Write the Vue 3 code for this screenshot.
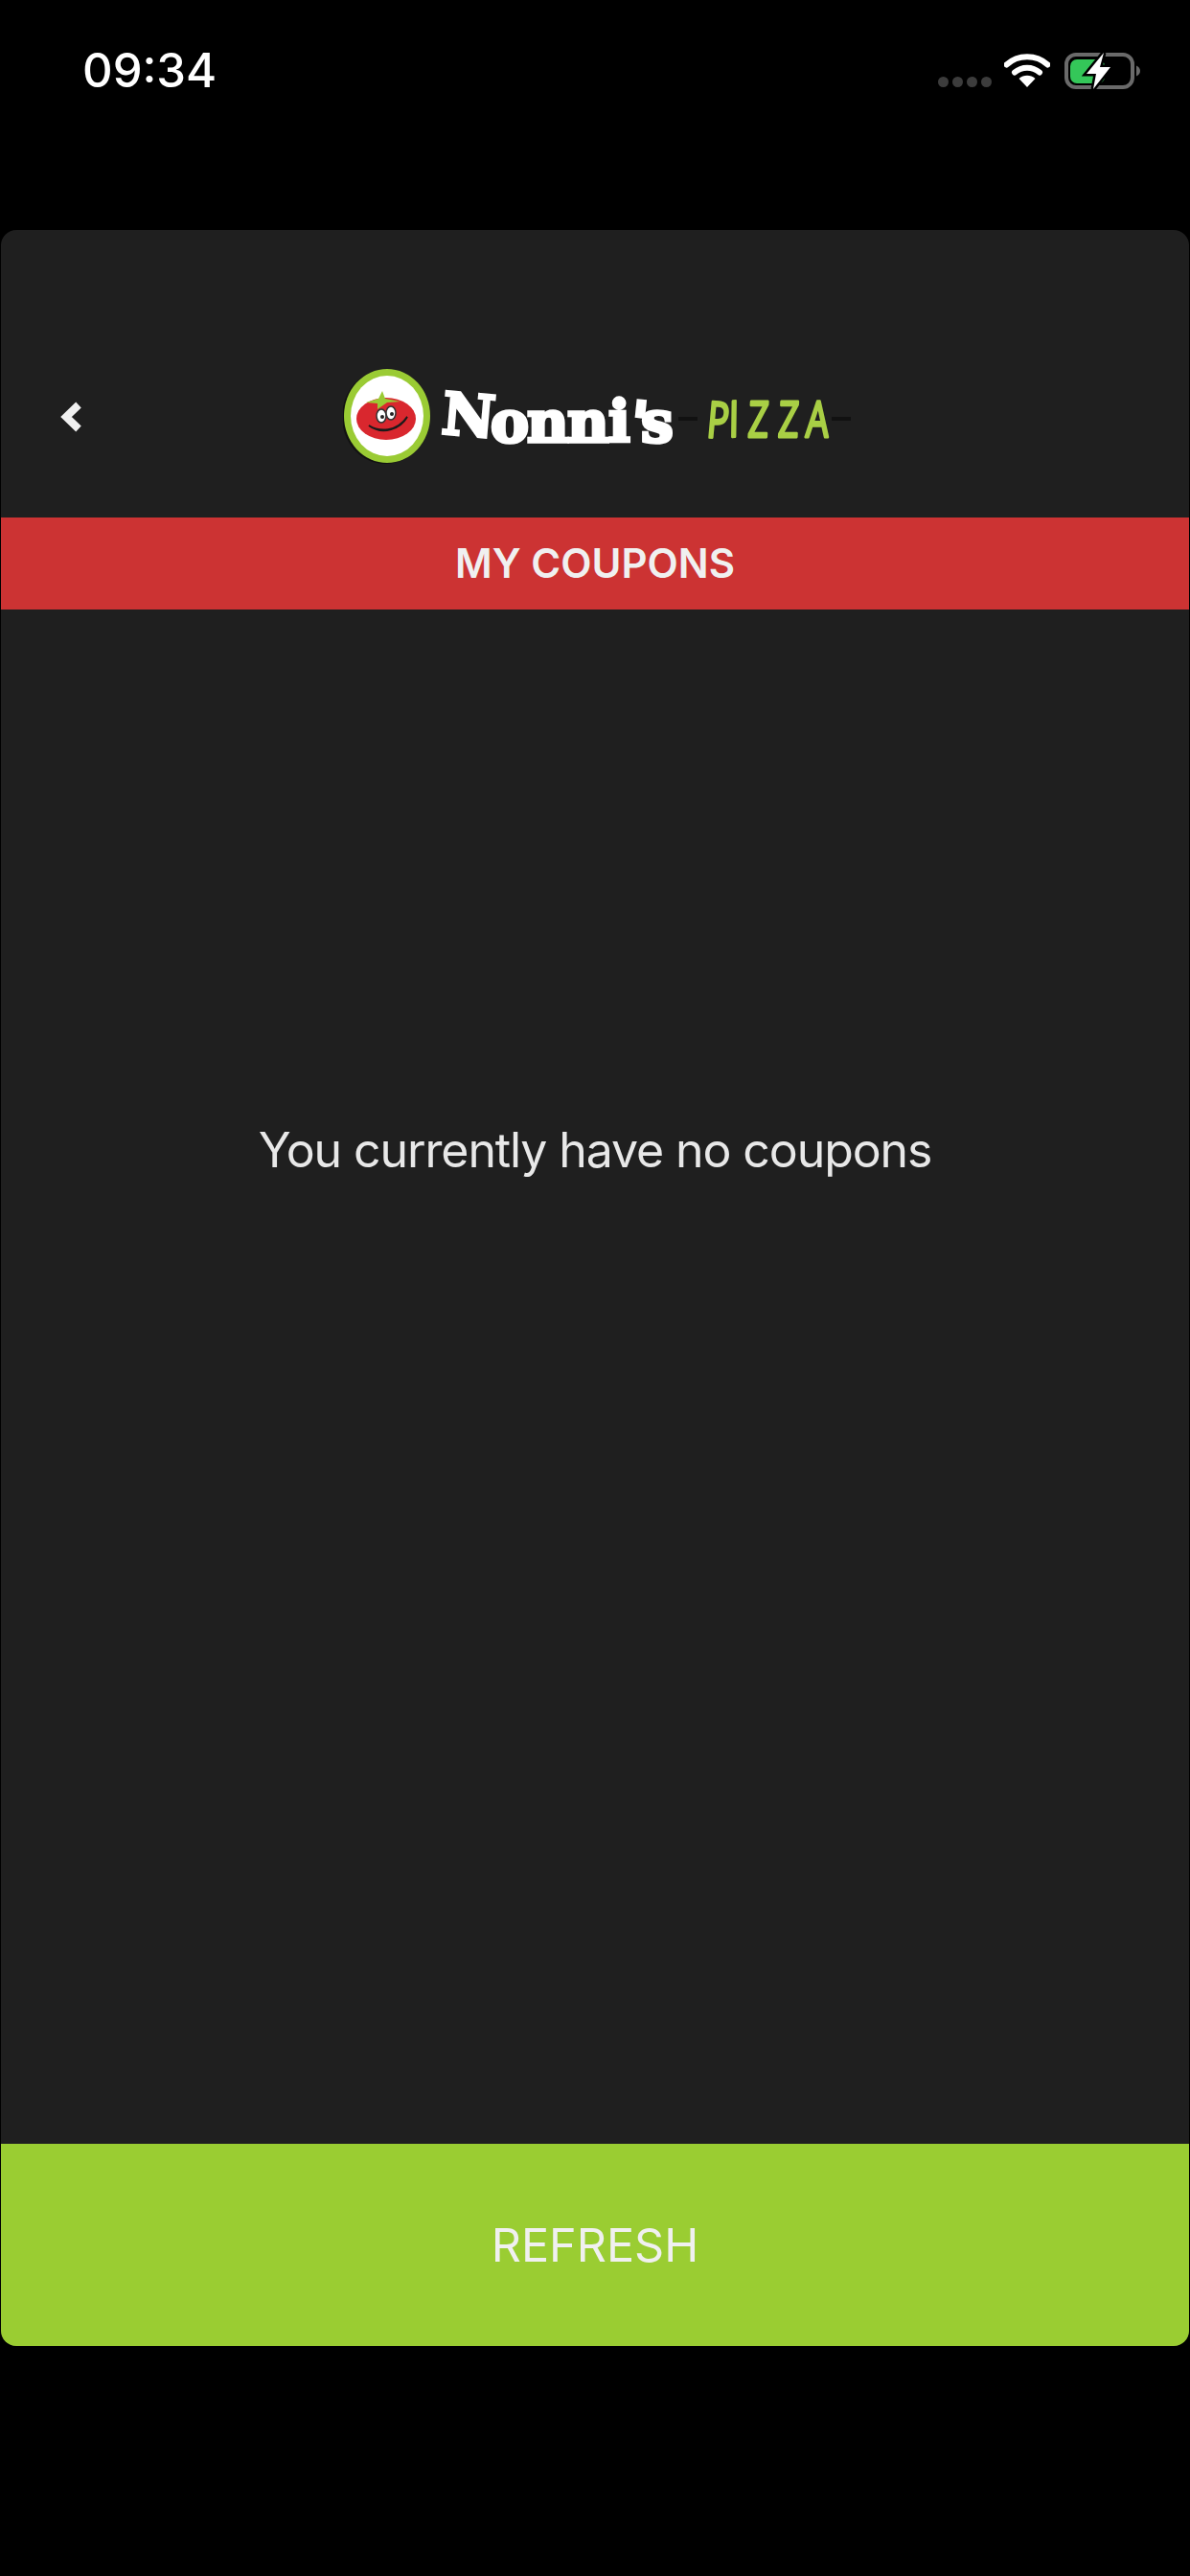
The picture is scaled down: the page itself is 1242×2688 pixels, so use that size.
<template>
  <div class="screen">
    <div class="status-bar">
      <span class="clock">09:34</span>
      <div class="status-icons">
        <div class="signal">
          <i v-for="n in 4" :key="n" class="dot"></i>
        </div>
        <svg class="wifi" width="48" height="36" viewBox="0 0 48 36">
          <path d="M2.500 12.500C14.500 1.500 33.500 1.500 45.500 12.500" class="arc" />
          <path d="M11 20.500C18.500 14 29.500 14 37 20.500" class="arc" />
          <path d="M24 36L15.500 27C20.500 22.800 27.500 22.800 32.500 27Z" fill="#fff" />
        </svg>
        <svg class="battery" width="80" height="38" viewBox="0 0 80 38">
          <rect x="2" y="2" width="69" height="34" rx="10" fill="none" stroke="#6a6a6a" stroke-width="4" />
          <path d="M75 13.500C77.500 14.500 79 16.500 79 19C79 21.500 77.500 23.500 75 24.500Z" fill="#6a6a6a" />
          <rect x="6" y="7" width="36" height="25" rx="7" fill="#34c759" />
          <path d="M41 0L23 22H33L30 38L48 15H37Z" fill="#fff" stroke="#000" stroke-width="5" paint-order="stroke" />
        </svg>
      </div>
    </div>

    <main class="card">
      <header class="top">
        <svg class="back" width="25" height="34" viewBox="0 0 25 34">
          <path d="M20 4.500L7 17L20 29.500" fill="none" stroke="#f0f0f0" stroke-width="8" />
        </svg>
        <svg class="logo" width="532" height="100" viewBox="0 0 532 100">
          <ellipse cx="44" cy="50" rx="45" ry="49" fill="#111" />
          <ellipse cx="46" cy="49" rx="45" ry="49" fill="#9acb34" />
          <ellipse cx="46" cy="49" rx="38" ry="42" fill="#fff" />
          <ellipse cx="45" cy="52" rx="31" ry="22" fill="#d9272e" />
          <path d="M24 35L37 31L41 23L44 31L60 34L46 35L36 42L36 36Z" fill="#9acb34" />
          <ellipse cx="40" cy="49" rx="5" ry="7" fill="#fff" stroke="#333" stroke-width="1.500" />
          <ellipse cx="50" cy="46" rx="5" ry="7" fill="#fff" stroke="#333" stroke-width="1.500" />
          <circle cx="41" cy="50" r="2" fill="#222" />
          <circle cx="51" cy="47" r="2" fill="#222" />
          <path d="M27 59C38 66 56 66 67 50C60 62 42 70 27 59Z" fill="#1a1a1a" stroke="#1a1a1a" stroke-width="2" />
          <text
            class="word"
            x="102 154 192 234 277 298 311"
            y="67 76 76 76 76 76 76"
            rotate="5 0 0 0 0 6 0"
          >Nonni's</text>
          <rect x="350" y="50" width="20" height="4" fill="#111" />
          <text
            class="pizza"
            x="526 559 586 630 670"
            y="0"
            rotate="3 -3 0 0 0"
            transform="translate(0,71) skewX(-3) scale(0.72,1)"
          >PIZZA</text>
          <rect x="510" y="50" width="20" height="4" fill="#111" />
        </svg>
      </header>

      <div class="banner">MY COUPONS</div>

      <div class="empty">
        <p>You currently have no coupons</p>
      </div>

      <button class="refresh" type="button">REFRESH</button>
    </main>
  </div>
</template>

<script setup>
</script>

<style>
html,
body {
  background: #000;
}
</style>

<style scoped>
.screen {
  display: flex;
  flex-direction: column;
  width: 1242px;
  height: 2688px;
  background: #000;
  color: #fff;
  font-family: Inter, "Liberation Sans", sans-serif;
}

.status-bar {
  display: flex;
  justify-content: space-between;
  align-items: flex-start;
  height: 240px;
  box-sizing: border-box;
  padding: 44px 51px 0 86px;
}

.clock {
  font-size: 49px;
  font-weight: 500;
  line-height: 60px;
}

.status-icons {
  display: flex;
  align-items: flex-start;
  padding-top: 11px;
}

.signal {
  display: flex;
  gap: 4px;
  margin-top: 25px;
  margin-right: 13px;
}

.dot {
  width: 11px;
  height: 11px;
  border-radius: 50%;
  background: #3c3c3c;
}

.wifi {
  margin-right: 15px;
}

.arc {
  fill: none;
  stroke: #fff;
  stroke-width: 6px;
  stroke-linecap: round;
}

.card {
  display: flex;
  flex-direction: column;
  height: 2208px;
  margin: 0 1px;
  border-radius: 16px;
  overflow: hidden;
  background: #1f1f1f;
}

.top {
  display: flex;
  align-items: center;
  height: 300px;
  flex-shrink: 0;
  padding: 90px 0 0 61px;
  box-sizing: border-box;
}

.back {
  margin-right: 271px;
}

.logo {
  filter: blur(0.7px);
}

.word {
  fill: #fff;
  stroke: #fff;
  stroke-width: 3.5px;
  font-family: "DejaVu Serif", serif;
  font-size: 60px;
  font-weight: 700;
}

.pizza {
  fill: #a9cf45;
  stroke: #a9cf45;
  stroke-width: 3px;
  stroke-linejoin: round;
  font-family: "Open Sans", sans-serif;
  font-size: 52px;
}

.banner {
  flex-shrink: 0;
  height: 96px;
  line-height: 96px;
  background: #cc3333;
  color: #f0f0f0;
  font-size: 42px;
  font-weight: 600;
  text-align: center;
}

.empty {
  flex: 1;
  display: flex;
  justify-content: center;
  padding-top: 534px;
}

.empty p {
  margin: 0;
  color: #e8e8e8;
  font-size: 50px;
  line-height: 60px;
  letter-spacing: -1.1px;
}

.refresh {
  flex-shrink: 0;
  height: 211px;
  border: 0;
  background: #9acd32;
  color: #f0f0f0;
  font-family: inherit;
  font-size: 48.5px;
}
</style>
